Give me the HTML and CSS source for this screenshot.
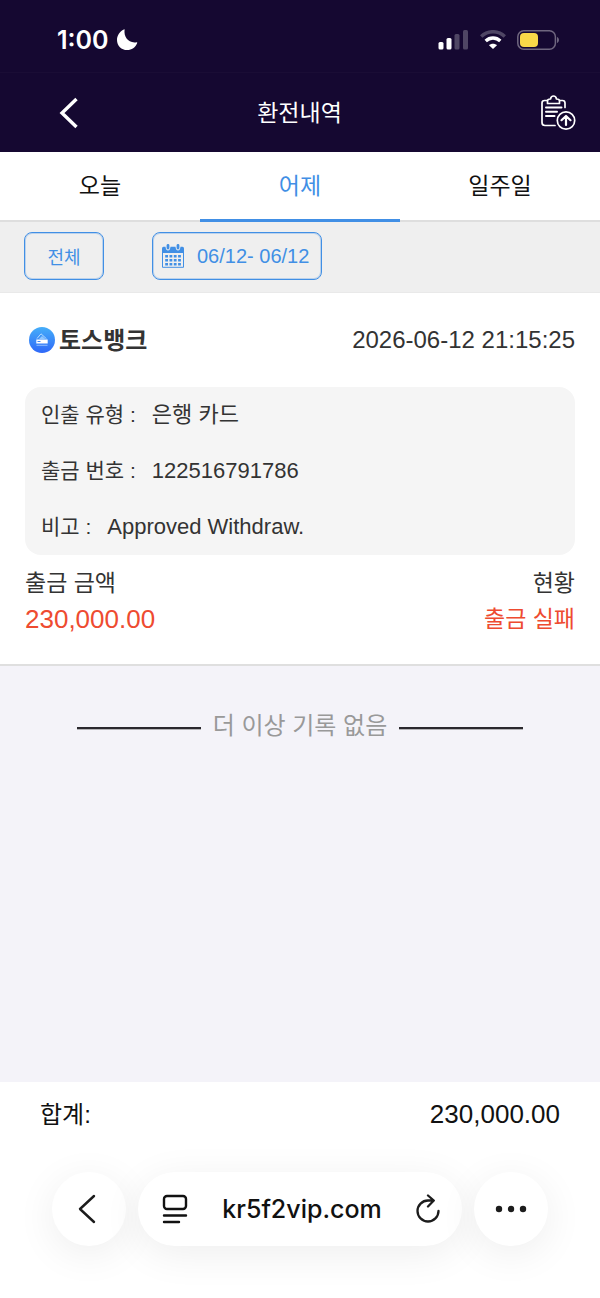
FILE: index.html
```html
<!DOCTYPE html>
<html lang="ko">
<head>
    <meta charset="UTF-8">
    <meta name="viewport" content="width=device-width, initial-scale=1.0">
    <title>환전내역</title>
    <link rel="stylesheet" href="styles.css">
</head>
<body>
    <div class="status-bar">
        <div class="status-time">
            <span>1:00</span>
            <svg width="22" height="22" viewBox="0 0 22 22"><path d="M8.6 .8C7.6 7.8 12.4 14.6 20.6 13.2 21.2 13.1 21.4 13.5 21.2 14 19.6 18.4 15.6 21 11.2 21 5.4 21 1 16.6 1 10.9 1 6.4 3.8 2.2 7.8.4 8.4.1 8.7.3 8.6.8Z" fill="#fff"/></svg>
        </div>
        <div class="status-icons">
            <svg width="32" height="20" viewBox="0 0 32 20" fill="#fff">
                <rect x="1.500" y="12" width="5" height="7.500" rx="1.500"/>
                <rect x="9.500" y="8" width="5" height="11.500" rx="1.500"/>
                <rect x="17.500" y="4" width="5" height="15.500" rx="1.500" opacity=".25"/>
                <rect x="26" y="0" width="5" height="19.500" rx="1.500" opacity=".25"/>
            </svg>
            <svg width="26" height="20" viewBox="0 0 26 20" fill="none" stroke="#fff">
                <path d="M1.2 6.4C7.8.1 18.2.1 24.8 6.4" stroke-width="3.4" opacity=".25"/>
                <path d="M5.7 11C10 7 16 7 20.3 11" stroke-width="3.4"/>
                <path d="M13 19 9 15.2C11.2 13.2 14.8 13.2 17 15.2Z" fill="#fff" stroke="none"/>
            </svg>
            <svg width="43" height="20" viewBox="0 0 43 20">
                <rect x=".8" y=".8" width="37.6" height="18.4" rx="6" fill="none" stroke="#6f667f" stroke-width="1.5"/>
                <path d="M40 7v6c2.6-1 2.6-5 0-6Z" fill="#6f667f"/>
                <rect x="3" y="3" width="18" height="14" rx="4" fill="#f8d848"/>
            </svg>
        </div>
    </div>

    <header class="header">
        <button type="button" class="icon-button" aria-label="뒤로">
            <svg width="20" height="32" viewBox="0 0 20 32"><path d="M17.500 2 3 16l14.500 14" fill="none" stroke="#fff" stroke-width="3.400"/></svg>
        </button>
        <h1>환전내역</h1>
        <button type="button" class="icon-button" aria-label="출금 신청">
            <svg width="36" height="36" viewBox="0 0 36 36" fill="none" stroke="#fff" stroke-width="1.7" stroke-linecap="round" stroke-linejoin="round">
                <path d="M7 5.500H4.500Q2 5.500 2 8v19.500Q2 30.500 5 30.500h10M20 5.500h2.500Q25 5.500 25 8v4.500"/>
                <path d="M7.500 8.500V6q0-2 3-2 .5-3 3-3t3 3q3 0 3 2v2.500Z"/>
                <path d="M6 12.500h15.500M6 16.800h11M6 21h8.500" stroke-width="2"/>
                <circle cx="26" cy="25.500" r="8.700"/>
                <path d="M26 30V21.500M21.500 25.200l4.500-4.200 4.500 4.200" stroke-width="2.200"/>
            </svg>
        </button>
    </header>

    <nav class="tabs">
        <button type="button">오늘</button>
        <button type="button" class="active">어제</button>
        <button type="button">일주일</button>
    </nav>

    <div class="filters">
        <button type="button" class="filter filter-type">전체</button>
        <button type="button" class="filter filter-date">
            <svg width="22" height="24" viewBox="0 0 22 24" fill="#418fe5">
                <path d="M0 9V4.500Q0 2.800 1.500 2.800H3.500Q3.800 6.500 6 6.500T8.500 2.800h5Q13.800 6.500 16 6.500t2.500-3.700h2Q22 2.800 22 4.500V9Z"/>
                <rect x="4.600" y="0" width="2.800" height="5.500" rx="1.400"/>
                <rect x="14.600" y="0" width="2.800" height="5.500" rx="1.400"/>
                <path d="M.5 8v15.300h21V8" fill="none" stroke="#418fe5"/>
                <path d="M3.200 12.200h16M3.200 16.200h16M3.200 20.200h16" fill="none" stroke="#418fe5" stroke-width="2.600" stroke-dasharray="2.800 1.500"/>
            </svg>
            <span>06/12- 06/12</span>
        </button>
    </div>

    <main class="content">
        <article class="record">
            <div class="record-head">
                <div class="bank">
                    <svg width="26" height="26" viewBox="0 0 26 26">
                        <defs>
                            <linearGradient id="bankFill" x1="0" y1="0" x2="0" y2="1">
                                <stop offset="0" stop-color="#45aef9"/>
                                <stop offset="1" stop-color="#2f68f8"/>
                            </linearGradient>
                        </defs>
                        <circle cx="13" cy="13" r="13" fill="url(#bankFill)"/>
                        <path d="M8 11.500 12 6.800l5.500 5" fill="none" stroke="#b5dcff"/>
                        <path d="M10 12 13 9l3.500 3Z" fill="#8fc6ff"/>
                        <path d="M7.300 12.500h11.400v4H7.300Z" fill="#fff"/>
                        <path d="M8.500 14.500h3" stroke="#3f83f6"/>
                        <path d="M7.500 18.300h11" stroke="#8fbcff"/>
                    </svg>
                    <h2>토스뱅크</h2>
                </div>
                <time datetime="2026-06-12T21:15:25">2026-06-12 21:15:25</time>
            </div>

            <dl class="details">
                <div>
                    <dt>인출 유형 :</dt>
                    <dd>은행 카드</dd>
                </div>
                <div>
                    <dt>출금 번호 :</dt>
                    <dd>122516791786</dd>
                </div>
                <div>
                    <dt>비고 :</dt>
                    <dd>Approved Withdraw.</dd>
                </div>
            </dl>

            <div class="summary">
                <div>
                    <p>출금 금액</p>
                    <p class="amount">230,000.00</p>
                </div>
                <div class="summary-right">
                    <p>현황</p>
                    <p class="failed">출금 실패</p>
                </div>
            </div>
        </article>

        <p class="no-more">더 이상 기록 없음</p>
    </main>

    <footer class="footer">
        <div class="total">
            <span>합계:</span>
            <span class="total-value">230,000.00</span>
        </div>
        <div class="browser-bar">
            <button type="button" class="round back" aria-label="이전 페이지">
                <svg width="18" height="30" viewBox="0 0 18 30"><path d="M16 2 2 15l14 13" fill="none" stroke="#1c1c1c" stroke-width="2.400" stroke-linecap="round" stroke-linejoin="round"/></svg>
            </button>
            <div class="address">
                <button type="button" aria-label="페이지 메뉴">
                    <svg width="26" height="30" viewBox="0 0 26 30" fill="none" stroke="#111" stroke-width="2.400" stroke-linecap="round">
                        <rect x="2" y="2" width="22" height="13" rx="3"/>
                        <path d="M2 21.500h22M2 28h15"/>
                    </svg>
                </button>
                <span>kr5f2vip.com</span>
                <button type="button" aria-label="새로고침">
                    <svg width="24" height="30" viewBox="0 0 24 30" fill="none" stroke="#1c1c1c" stroke-width="2.300" stroke-linecap="round" stroke-linejoin="round">
                        <path d="M22.500 17A10.500 10.500 0 1 1 12 6.500h5.500M12 1.500 17.800 6.500 12 12.500"/>
                    </svg>
                </button>
            </div>
            <button type="button" class="round" aria-label="더보기">
                <svg width="32" height="8" viewBox="0 0 32 8" fill="#1c1c1c"><circle cx="4" cy="4" r="3.200"/><circle cx="16" cy="4" r="3.200"/><circle cx="28" cy="4" r="3.200"/></svg>
            </button>
        </div>
    </footer>
</body>
</html>
```
FILE: styles.css
```css
*,
*::before,
*::after {
    margin: 0;
    padding: 0;
    box-sizing: border-box;
}

body {
    font-family: "Liberation Sans", "Noto Sans CJK KR", sans-serif;
    font-size: 22px;
    color: #333;
    background: #f4f3f9;
    min-height: 100vh;
    display: flex;
    flex-direction: column;
}

button {
    font: inherit;
    color: inherit;
    background: none;
    border: none;
    cursor: pointer;
}

svg {
    display: block;
    flex-shrink: 0;
}

/* status bar */
.status-bar {
    height: 73px;
    padding: 8px 40px 0 57px;
    display: flex;
    align-items: center;
    justify-content: space-between;
    background: #150831;
    border-bottom: 1px solid #1a0d35;
    color: #fff;
}

.status-time {
    display: flex;
    align-items: center;
    gap: 7px;
    font-family: Inter, sans-serif;
    font-size: 25px;
    font-weight: 600;
}

.status-icons {
    display: flex;
    align-items: center;
    gap: 11px;
}

/* page header */
.header {
    height: 79px;
    padding: 0 24px 0 59px;
    display: grid;
    grid-template-columns: 1fr auto 1fr;
    align-items: center;
    background: #150831;
    color: #fff;
}

.header h1 {
    font-size: 23px;
    font-weight: 400;
    padding: 0 36px 4px 0;
}

.icon-button:last-child {
    justify-self: end;
}

.icon-button:first-child {
    justify-self: start;
}

/* tabs */
.tabs {
    display: flex;
    height: 70px;
    background: #fff;
    border-bottom: 2px solid #dedede;
    color: #111;
    font-size: 23px;
}

.tabs button {
    flex: 1;
    margin-bottom: -2px;
    padding-bottom: 4px;
    border-bottom: 3px solid transparent;
}

.tabs .active {
    color: #418fe5;
    border-bottom-color: #418fe5;
}

/* filters */
.filters {
    display: flex;
    align-items: flex-start;
    gap: 48px;
    height: 71px;
    padding: 10px 24px;
    background: #efefef;
    border-bottom: 1px solid #e9e9e9;
}

.filter {
    height: 48px;
    display: flex;
    align-items: center;
    justify-content: center;
    border: 1px solid #418fe5;
    border-radius: 8px;
    color: #418fe5;
    box-shadow: inset 0 0 0 1px rgba(65, 143, 229, 0.3);
}

.filter-type {
    width: 80px;
    font-size: 18px;
}

.filter-date {
    padding: 0 12px 0 9px;
    gap: 13px;
    font-size: 20px;
}

/* records */
.content {
    flex: 1;
}

.record {
    background: #fff;
    padding: 20px 25px 27px;
    border-bottom: 2px solid #dfdfdf;
}

.record-head {
    display: flex;
    align-items: center;
    justify-content: space-between;
    height: 54px;
    margin-bottom: 20px;
    font-size: 24px;
}

.bank {
    display: flex;
    align-items: center;
    gap: 4px;
    padding-left: 4px;
}

.bank h2 {
    font-size: 24px;
    font-weight: 700;
    padding-bottom: 4px;
}

.details {
    background: #f5f5f5;
    border-radius: 16px;
    padding: 0 16px;
    margin-bottom: 10px;
}

.details div {
    display: flex;
    align-items: baseline;
    height: 56px;
    line-height: 56px;
}

.details dt {
    font-size: 21px;
}

.details dd {
    margin-left: 16px;
}

.summary {
    display: flex;
    justify-content: space-between;
    font-size: 23px;
    line-height: 36px;
}

.summary-right {
    text-align: right;
}

.amount,
.failed {
    color: #ee4b30;
}

.amount {
    font-size: 26px;
}

.no-more {
    display: flex;
    align-items: center;
    justify-content: center;
    gap: 12px;
    margin-top: 42px;
    padding: 0 77px;
    font-size: 24px;
    line-height: 36px;
    color: #999;
    white-space: nowrap;
}

.no-more::before,
.no-more::after {
    content: "";
    flex: 1;
    height: 3px;
    margin-top: 4px;
    border-top: 2px solid #2a282e;
    border-bottom: 1px solid #b3b2b6;
}

/* total and browser bar */
.footer {
    background: #fff;
    padding-bottom: 52px;
}

.total {
    display: flex;
    align-items: baseline;
    justify-content: space-between;
    line-height: 64px;
    padding: 0 40px;
    margin-bottom: 25px;
    font-size: 24px;
    color: #111;
}

.total-value {
    font-size: 26px;
}

.browser-bar {
    display: flex;
    gap: 12px;
    padding: 0 52px;
    color: #111;
}

.round,
.address {
    height: 74px;
    border-radius: 37px;
    background: #fff;
    box-shadow: 0 8px 40px rgba(0, 0, 0, 0.07);
    display: flex;
    align-items: center;
}

.round {
    width: 74px;
    justify-content: center;
}

.back {
    padding-right: 4px;
}

.address {
    flex: 1;
    justify-content: space-between;
    padding: 0 22px 0 24px;
    font-family: Inter, sans-serif;
    font-size: 25px;
    font-weight: 500;
}
```
